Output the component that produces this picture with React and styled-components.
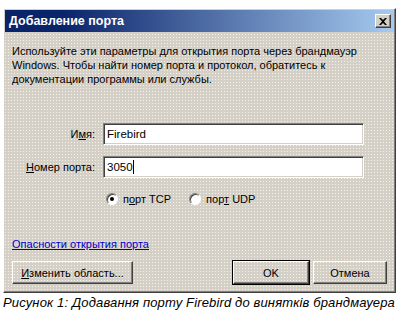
import React from 'react'
import styled, { createGlobalStyle, css } from 'styled-components'

const Colors = {
  face: '#d4d0c8',
  shadow: '#808080',
  dark: '#404040',
  light: '#ffffff',
  titleFrom: '#0a246a',
  titleTo: '#a6caf0',
  link: '#0000cc',
}

const GlobalStyle = createGlobalStyle`
  html, body {
    margin: 0;
    background: #ffffff;
  }
  body {
    font-family: 'Liberation Sans', Arial, sans-serif;
  }
`

const raised = css`
  border-top: 1px solid ${Colors.light};
  border-left: 1px solid ${Colors.light};
  border-right: 1px solid ${Colors.dark};
  border-bottom: 1px solid ${Colors.dark};
  box-shadow: inset -1px -1px 0 ${Colors.shadow};
`

const Page = styled.div`
  display: flex;
  flex-direction: column;
  width: 399px;
  padding: 8px 0 0 3px;
  box-sizing: border-box;
`

const Window = styled.div`
  width: 393px;
  box-sizing: border-box;
  padding: 1px;
  background-color: ${Colors.face};
  background-image: radial-gradient(circle, rgba(255, 252, 235, 0.8) 0.6px, transparent 0.95px);
  background-size: 3px 3px;
  ${raised};
`

const TitleBar = styled.div`
  display: flex;
  align-items: center;
  justify-content: space-between;
  height: 22px;
  padding: 0 3px 0 4px;
  background: linear-gradient(to right, ${Colors.titleFrom} 0%, ${Colors.titleFrom} 15%, ${Colors.titleTo} 100%);
  color: #fff;
  font-size: 12.5px;
  font-weight: bold;
`

const CloseButton = styled.div`
  display: flex;
  align-items: center;
  justify-content: center;
  width: 16px;
  height: 14px;
  box-sizing: border-box;
  background: ${Colors.face};
  ${raised};
`

const Body = styled.div`
  display: flex;
  flex-direction: column;
  padding: 12px 7px 7px 7px;
  font-size: 11px;
  color: #000;
`

const Description = styled.p`
  margin: 0;
  line-height: 14px;
`

const Fields = styled.div`
  display: flex;
  flex-direction: column;
  gap: 11px;
  margin-top: 37px;
`

const FieldRow = styled.div`
  display: flex;
  align-items: center;
  gap: 8px;
`

const Label = styled.label`
  width: 83px;
  text-align: right;
`

const Key = styled.span`
  text-decoration: underline;
`

const Input = styled.div`
  display: flex;
  align-items: center;
  width: 261px;
  height: 22px;
  box-sizing: border-box;
  padding-left: 3px;
  background: #fff;
  border-top: 1px solid ${Colors.shadow};
  border-left: 1px solid ${Colors.shadow};
  border-right: 1px solid ${Colors.light};
  border-bottom: 1px solid ${Colors.light};
  box-shadow: inset 1px 1px 0 ${Colors.dark}, inset -1px -1px 0 ${Colors.face};
  font-size: 11.5px;
`

const Caret = styled.span`
  display: inline-block;
  width: 1px;
  height: 14px;
  background: #000;
`

const RadioRow = styled.div`
  display: flex;
  align-items: center;
  gap: 18px;
  margin: 14px 0 0 94px;
  height: 14px;
`

const RadioOption = styled.label`
  display: flex;
  align-items: center;
  gap: 5px;
`

const RadioCircle = styled.span`
  position: relative;
  width: 12px;
  height: 12px;
  box-sizing: border-box;
  border-radius: 50%;
  background: #fff;
  border-top: 1px solid ${Colors.shadow};
  border-left: 1px solid ${Colors.shadow};
  border-right: 1px solid ${Colors.light};
  border-bottom: 1px solid ${Colors.light};
  box-shadow: inset 1px 1px 0 ${Colors.dark};

  ${(p) =>
    p.$checked &&
    css`
      &::after {
        content: '';
        position: absolute;
        left: 3px;
        top: 3px;
        width: 4px;
        height: 4px;
        border-radius: 50%;
        background: #000;
      }
    `}
`

const Link = styled.a`
  margin-top: 31px;
  line-height: 14px;
  color: ${Colors.link};
  text-decoration: underline;
`

const ButtonRow = styled.div`
  display: flex;
  align-items: center;
  justify-content: space-between;
  margin-top: 10px;
`

const ButtonGroup = styled.div`
  display: flex;
  gap: 4px;
`

const Button = styled.div`
  display: flex;
  align-items: center;
  justify-content: center;
  width: ${(p) => p.$width}px;
  height: 23px;
  box-sizing: border-box;
  ${raised};
  ${(p) =>
    p.$default &&
    css`
      outline: 1px solid #000;
      outline-offset: 0;
    `}
`

const Caption = styled.div`
  margin-top: 2px;
  font-style: italic;
  font-size: 13px;
  letter-spacing: 0.15px;
  color: #000;
  white-space: nowrap;
`

const CloseIcon = () => (
  <svg width="8" height="7" viewBox="0 0 8 7">
    <path d="M0 0h2l2 2 2-2h2L5 3.5 8 7H6L4 5 2 7H0l3-3.5z" fill="#000" />
  </svg>
)

export default function App() {
  return (
    <>
      <GlobalStyle />
      <Page>
        <Window>
          <TitleBar>
            <span>Добавление порта</span>
            <CloseButton>
              <CloseIcon />
            </CloseButton>
          </TitleBar>
          <Body>
            <Description>
              Используйте эти параметры для открытия порта через брандмауэр
              <br />
              Windows. Чтобы найти номер порта и протокол, обратитесь к
              <br />
              документации программы или службы.
            </Description>
            <Fields>
              <FieldRow>
                <Label>
                  И<Key>м</Key>я:
                </Label>
                <Input>Firebird</Input>
              </FieldRow>
              <FieldRow>
                <Label>
                  <Key>Н</Key>омер порта:
                </Label>
                <Input>
                  3050
                  <Caret />
                </Input>
              </FieldRow>
            </Fields>
            <RadioRow>
              <RadioOption>
                <RadioCircle $checked />
                <span>
                  п<Key>о</Key>рт TCP
                </span>
              </RadioOption>
              <RadioOption>
                <RadioCircle />
                <span>
                  пор<Key>т</Key> UDP
                </span>
              </RadioOption>
            </RadioRow>
            <Link>Опасности открытия порта</Link>
            <ButtonRow>
              <Button $width={121}>
                <span>
                  <Key>И</Key>зменить область...
                </span>
              </Button>
              <ButtonGroup>
                <Button $width={76} $default>
                  OK
                </Button>
                <Button $width={74}>Отмена</Button>
              </ButtonGroup>
            </ButtonRow>
          </Body>
        </Window>
        <Caption>Рисунок 1: Додавання порту Firebird до винятків брандмауера</Caption>
      </Page>
    </>
  )
}
